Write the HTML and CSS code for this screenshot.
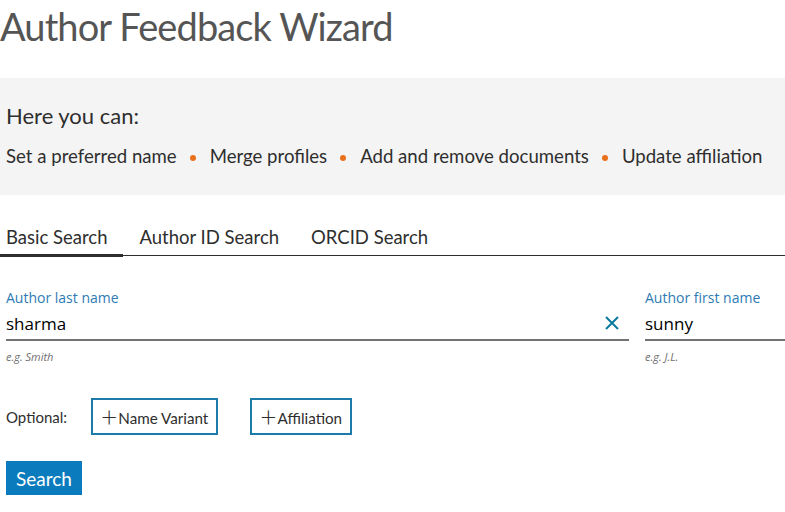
FILE: index.html
```html
<!DOCTYPE html>
<html lang="en">
<head>
    <meta charset="UTF-8">
    <title>Author Feedback Wizard</title>
    <link rel="stylesheet" href="styles.css">
</head>
<body>
    <main>
        <h1>Author Feedback Wizard</h1>
        <section class="intro">
            <h2>Here you can:</h2>
            <ul class="features">
                <li>Set a preferred name</li>
                <li>Merge profiles</li>
                <li>Add and remove documents</li>
                <li>Update affiliation</li>
            </ul>
        </section>
        <nav class="tabs">
            <a class="tab active">Basic Search</a>
            <a class="tab">Author ID Search</a>
            <a class="tab">ORCID Search</a>
        </nav>
        <div class="campos">
            <div class="campo last">
                <label for="lastname">Author last name</label>
                <div class="linha">
                    <input id="lastname" type="text" value="sharma">
                    <svg class="limpar" width="14" height="14" viewBox="0 0 14 14">
                        <path d="M1 1 L13 13 M13 1 L1 13" stroke="#0a7a9e" stroke-width="2" fill="none"/>
                    </svg>
                </div>
                <span class="dica">e.g. Smith</span>
            </div>
            <div class="campo first">
                <label for="firstname">Author first name</label>
                <div class="linha">
                    <input id="firstname" type="text" value="sunny">
                </div>
                <span class="dica">e.g. J.L.</span>
            </div>
        </div>
        <div class="opcional">
            <span>Optional:</span>
            <button class="extra"><span class="mais">+</span>Name Variant</button>
            <button class="extra"><span class="mais">+</span>Affiliation</button>
        </div>
        <button class="buscar">Search</button>
    </main>
</body>
</html>
```

FILE: styles.css
```css
* {
    font-family: Lato, "Open Sans", sans-serif;
    box-sizing: border-box;
}
body {
    margin: 0;
    background: #fff;
    color: #2e2e2e;
}
h1 {
    margin: 0;
    padding-top: 2px;
    font-size: 38px;
    font-weight: 400;
    color: #555;
    letter-spacing: -0.9px;
    line-height: 48px;
}
.intro {
    margin-top: 28px;
    background: #f4f4f4;
    padding: 24px 6px 18px;
    height: 117px;
}
.intro h2 {
    margin: 0;
    font-size: 22px;
    font-weight: 400;
    line-height: 28px;
}
.features {
    list-style: none;
    display: flex;
    margin: 14px 0 0;
    padding: 0;
    font-size: 18.6px;
    line-height: 24px;
}
.features li + li::before {
    content: "";
    display: inline-block;
    width: 6px;
    height: 6px;
    border-radius: 50%;
    background: #e9711c;
    margin: 0 14px 0 13px;
    vertical-align: middle;
}
.tabs {
    display: flex;
    margin-top: 28px;
    border-bottom: 1px solid #2e2e2e;
}
.tab {
    font-size: 18.5px;
    line-height: 24px;
    padding: 2px 16px 5px;
}
.tab:first-child {
    padding-left: 6px;
}
.tab.active {
    border-bottom: 3px solid #2e2e2e;
    margin-bottom: -2px;
}
.campos {
    display: flex;
    gap: 16px;
    margin-top: 33px;
    padding-left: 6px;
}
.campo label {
    display: block;
    font-family: "Open Sans", sans-serif;
    font-size: 14px;
    color: #2e7bb5;
    line-height: 18px;
}
.campo.last {
    flex: 1;
}
.campo.first {
    width: 140px;
}
.linha {
    display: flex;
    align-items: center;
    border-bottom: 2px solid #737373;
    height: 34px;
}
.linha input {
    flex: 1;
    min-width: 0;
    border: none;
    outline: none;
    padding: 0;
    font-family: "Open Sans", sans-serif;
    font-size: 17px;
    color: #000;
    background: transparent;
}
.limpar {
    margin-right: 10px;
}
.dica {
    display: block;
    margin-top: 8px;
    font-family: "Open Sans", sans-serif;
    font-size: 11px;
    font-style: italic;
    color: #6e6e6e;
}
.opcional {
    display: flex;
    align-items: center;
    margin-top: 34px;
    padding-left: 6px;
    font-size: 15px;
}
.opcional > span {
    margin-right: 24px;
}
.extra {
    background: #fff;
    border: 2px solid #1c7ba8;
    height: 37px;
    padding: 0 8px 0 8px;
    font-size: 15.2px;
    color: #2e2e2e;
    margin-right: 32px;
}
.mais {
    font-size: 28px;
    font-weight: 300;
    line-height: 20px;
    margin-right: 1px;
    vertical-align: -3px;
}
.buscar {
    display: block;
    margin: 26px 0 0 6px;
    background: #0a7bbd;
    color: #fff;
    border: none;
    height: 34px;
    padding: 0 10px;
    font-size: 19px;
}
```
